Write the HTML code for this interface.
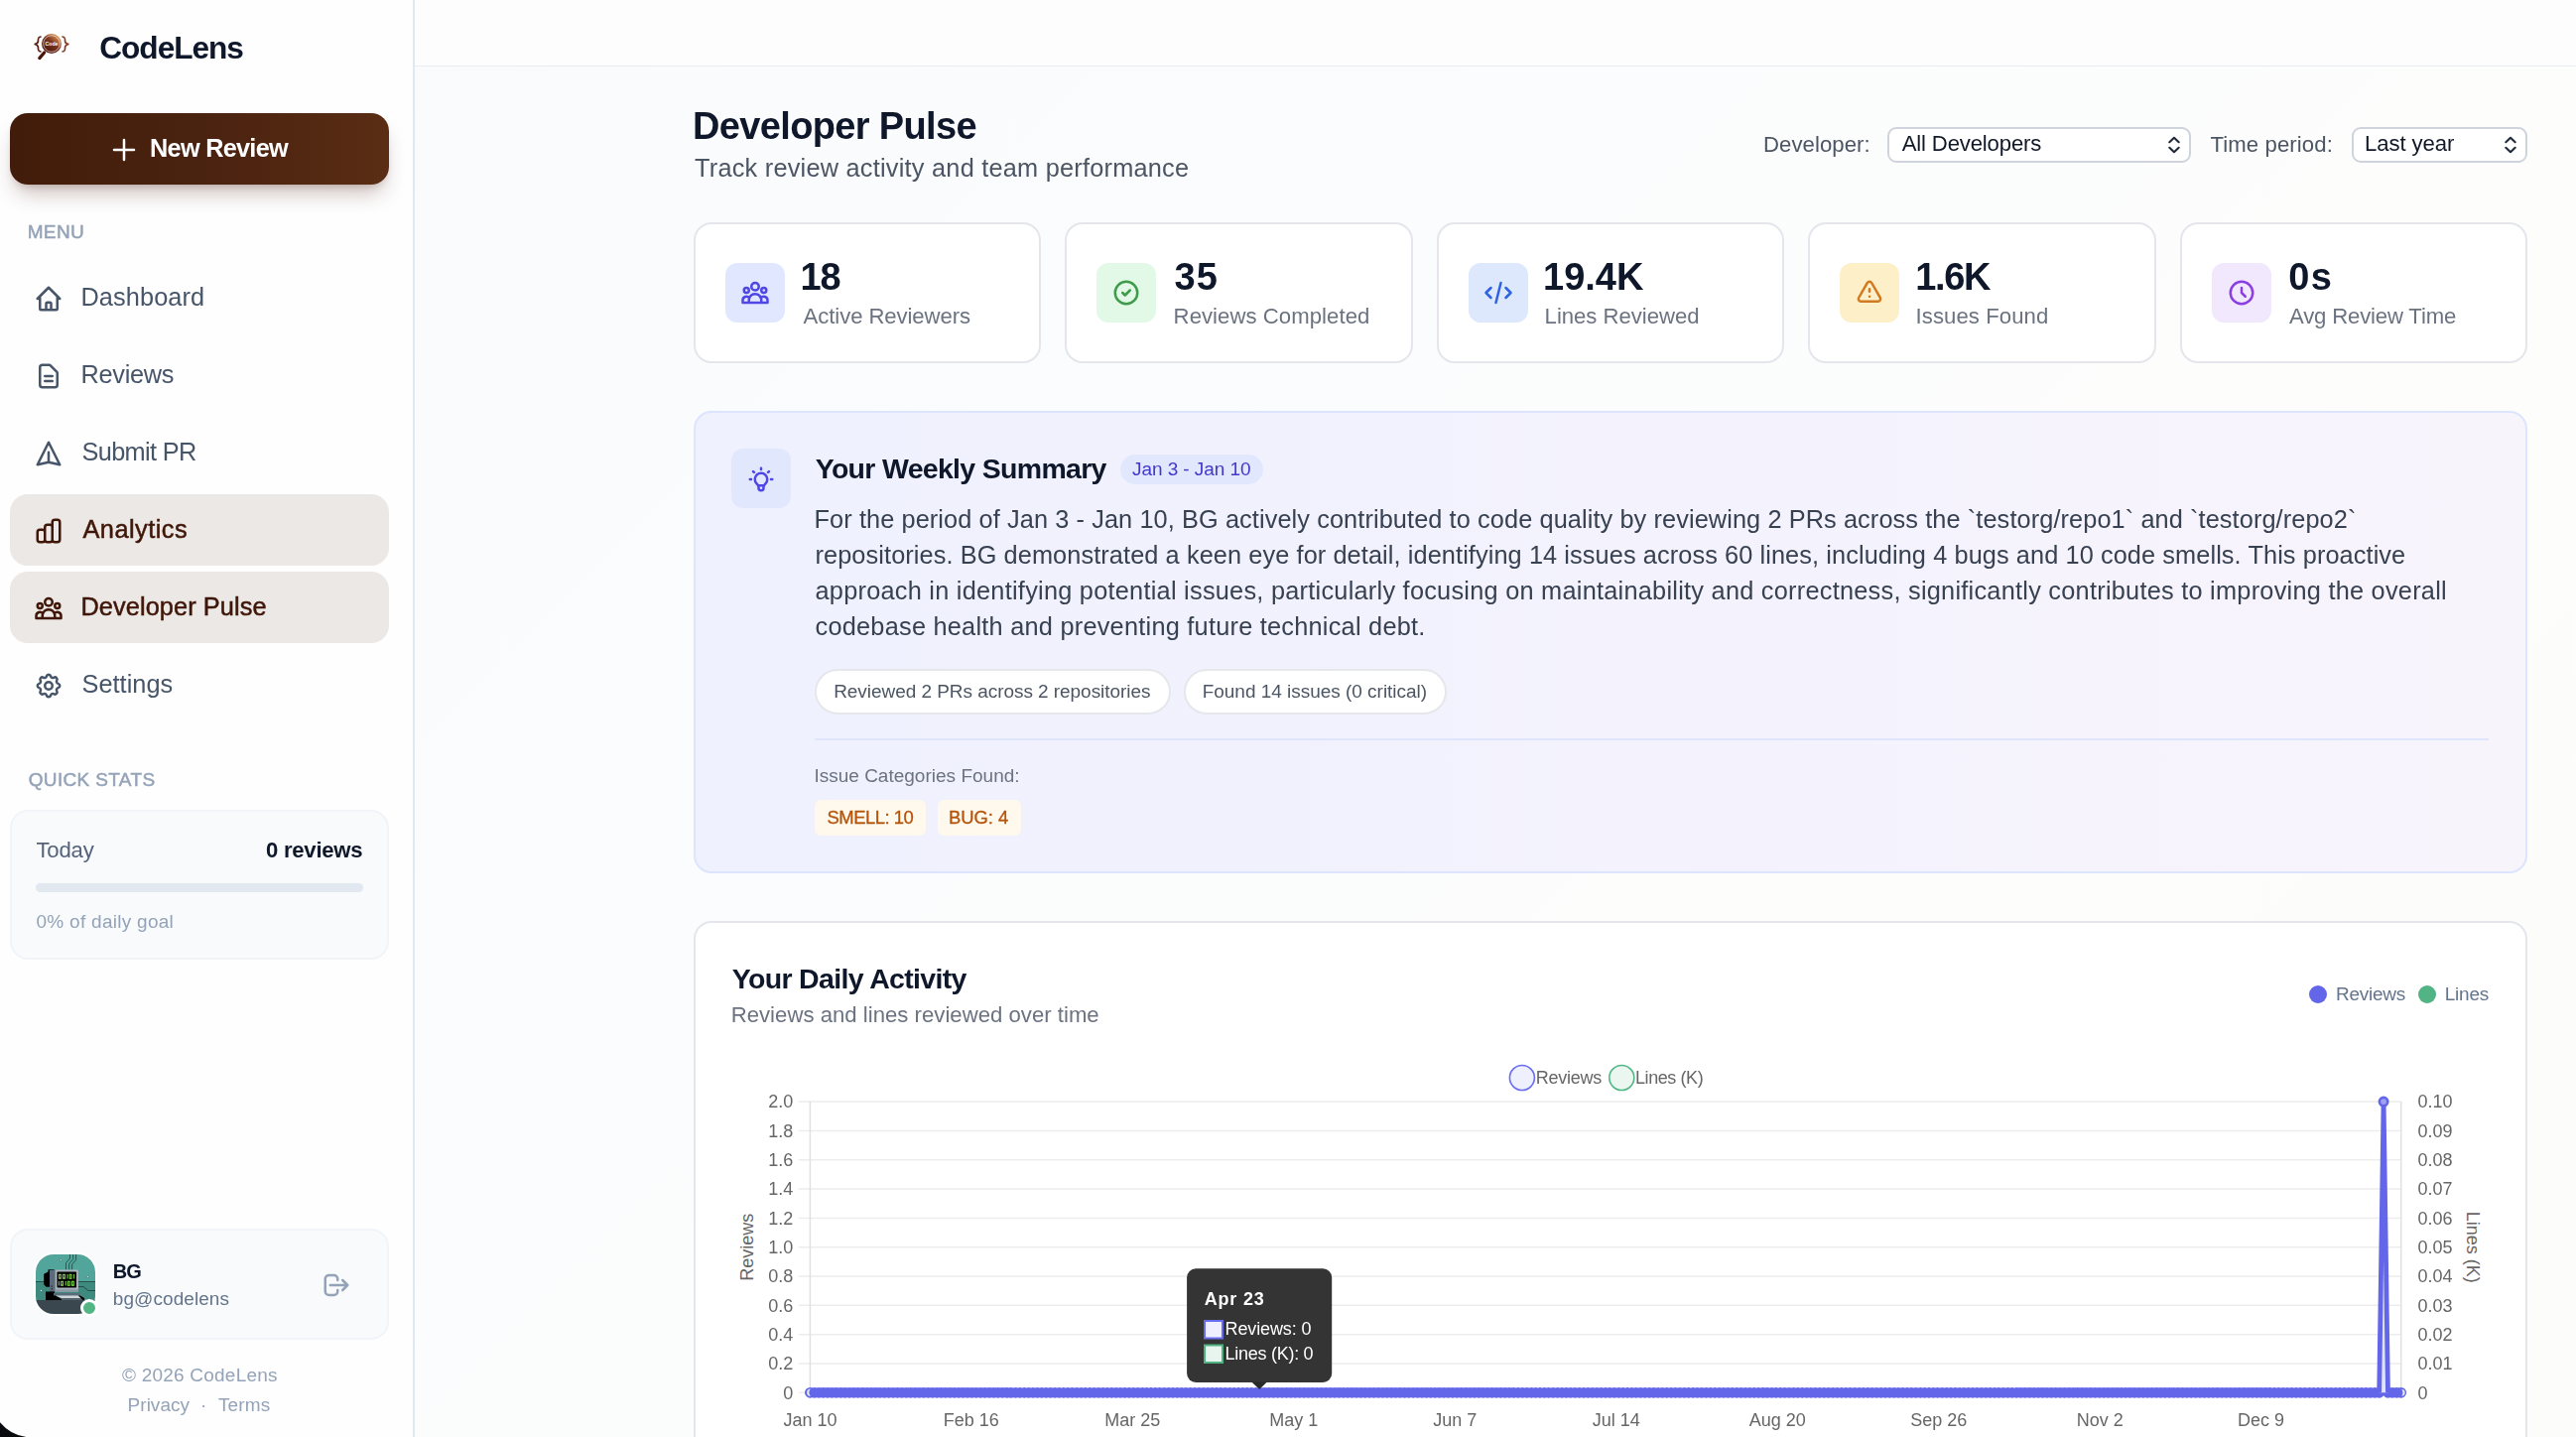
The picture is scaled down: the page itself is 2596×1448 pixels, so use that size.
<!DOCTYPE html>
<html lang="en"><head><meta charset="utf-8"><title>CodeLens - Developer Pulse</title>
<style>
*{box-sizing:border-box;margin:0;padding:0}
html,body{width:2596px;height:1448px;overflow:hidden}
body{position:relative;font-family:"Liberation Sans",sans-serif;background:linear-gradient(135deg,#f8fafc 0%,#fbfcfd 40%,#fdfdfc 70%,#fcfcfa 100%);}
.a{position:absolute}
.t{position:absolute;white-space:nowrap;font-family:"Liberation Sans",sans-serif}
.sidebar{left:0;top:0;width:418px;height:1448px;background:#fefefe;border-right:2px solid #e2e8f0}
.header{left:418px;top:0;width:2178px;height:67px;background:#fdfdfe;border-bottom:1.5px solid #e8edf3}
.btn{left:10px;top:114px;width:382px;height:72px;border-radius:18px;background:linear-gradient(90deg,#421c0a 0%,#4a2210 50%,#5a2d14 100%);box-shadow:0 14px 22px -6px rgba(67,20,7,.28),0 5px 9px -5px rgba(67,20,7,.25)}
.navact{left:10px;width:382px;height:72px;border-radius:18px;background:#ebe8e5}
.qcard{left:10px;width:382px;border-radius:18px;background:#f8fafc;border:2px solid #f1f4f8}
.card{background:#fff;border:2px solid #e4e6eb;border-radius:18px}
.ibox{width:60px;height:60px;border-radius:12px}
.sel{top:128px;height:36px;background:#fff;border:2px solid #cfd4dc;border-radius:9px}
.pill{top:674px;height:45.5px;background:#fff;border:2px solid #e5e7eb;border-radius:23px}
.tag{top:806px;height:36px;background:#fef9ec;border-radius:6px}
svg{position:absolute;overflow:visible}
.ic{fill:none;stroke-width:2;stroke-linecap:round;stroke-linejoin:round}

</style></head>
<body>
<div class="a header"></div>
<div class="a sidebar"></div>

<!-- logo -->
<svg class="a" style="left:30px;top:30px" width="44" height="34" viewBox="30 30 44 34">
  <defs>
    <linearGradient id="lg" x1="0.15" y1="0.9" x2="0.85" y2="0.1"><stop offset="0" stop-color="#4a1208"/><stop offset="0.55" stop-color="#7a3320"/><stop offset="1" stop-color="#e39a55"/></linearGradient>
  </defs>
  <path d="M41.6 37 C37.8 37 38.6 39.5 38.4 41.6 C38.2 43.5 36.6 44.3 34.6 44.5 C36.6 44.7 38.2 45.5 38.4 47.4 C38.6 49.5 37.8 52 41.6 52" fill="none" stroke="#5a1d10" stroke-width="1.7"/>
  <path d="M62.4 37 C66.2 37 65.4 39.5 65.6 41.6 C65.8 43.5 67.4 44.3 69.4 44.5 C67.4 44.7 65.8 45.5 65.6 47.4 C65.4 49.5 66.2 52 62.4 52" fill="none" stroke="#8a3d22" stroke-width="1.7"/>
  <line x1="44.6" y1="53" x2="39.8" y2="58.6" stroke="#4a1208" stroke-width="3.2" stroke-linecap="round"/>
  <circle cx="52" cy="44" r="10" fill="url(#lg)"/>
  <circle cx="52" cy="44" r="8.3" fill="none" stroke="#fff" stroke-opacity=".85" stroke-width=".7"/>
  <text x="52" y="46" text-anchor="middle" font-family="Liberation Sans, sans-serif" font-weight="700" font-size="5.2" fill="#fff">Code</text>
</svg>

<!-- new review button -->
<div class="a btn"></div>
<svg class="a ic" style="left:110px;top:136px" width="30" height="30" viewBox="0 0 24 24" stroke="#fff"><path d="M12 4v16m8-8H4"/></svg>

<!-- nav -->
<div class="a navact" style="top:498px"></div>
<div class="a navact" style="top:576px"></div>
<svg class="a ic" style="left:33.800px;top:286px" width="30" height="30" viewBox="0 0 24 24" stroke="#475569"><path d="M3 12l2-2m0 0l7-7 7 7M5 10v10a1 1 0 001 1h3m10-11l2 2m-2-2v10a1 1 0 01-1 1h-3m-6 0a1 1 0 001-1v-4a1 1 0 011-1h2a1 1 0 011 1v4a1 1 0 001 1m-6 0h6"/></svg>
<svg class="a ic" style="left:33.800px;top:364px" width="30" height="30" viewBox="0 0 24 24" stroke="#475569"><path d="M9 12h6m-6 4h6m2 5H7a2 2 0 01-2-2V5a2 2 0 012-2h5.586a1 1 0 01.707.293l5.414 5.414a1 1 0 01.293.707V19a2 2 0 01-2 2z"/></svg>
<svg class="a ic" style="left:33.800px;top:442px" width="30" height="30" viewBox="0 0 24 24" stroke="#475569"><path d="M12 19l9 2-9-18-9 18 9-2zm0 0v-8"/></svg>
<svg class="a ic" style="left:33.800px;top:520px" width="30" height="30" viewBox="0 0 24 24" stroke="#3f1608"><path d="M9 19v-6a2 2 0 00-2-2H5a2 2 0 00-2 2v6a2 2 0 002 2h2a2 2 0 002-2zm0 0V9a2 2 0 012-2h2a2 2 0 012 2v10m-6 0a2 2 0 002 2h2a2 2 0 002-2m0 0V5a2 2 0 012-2h2a2 2 0 012 2v14a2 2 0 01-2 2h-2a2 2 0 01-2-2z"/></svg>
<svg class="a ic" style="left:33.800px;top:598px" width="30" height="30" viewBox="0 0 24 24" stroke="#3f1608"><path d="M17 20h5v-2a3 3 0 00-5.356-1.857M17 20H7m10 0v-2c0-.656-.126-1.283-.356-1.857M7 20H2v-2a3 3 0 015.356-1.857M7 20v-2c0-.656.126-1.283.356-1.857m0 0a5.002 5.002 0 019.288 0M15 7a3 3 0 11-6 0 3 3 0 016 0zm6 3a2 2 0 11-4 0 2 2 0 014 0zM7 10a2 2 0 11-4 0 2 2 0 014 0z"/></svg>
<svg class="a ic" style="left:33.800px;top:676px" width="30" height="30" viewBox="0 0 24 24" stroke="#475569"><path d="M10.325 4.317c.426-1.756 2.924-1.756 3.35 0a1.724 1.724 0 002.573 1.066c1.543-.94 3.31.826 2.37 2.37a1.724 1.724 0 001.065 2.572c1.756.426 1.756 2.924 0 3.35a1.724 1.724 0 00-1.066 2.573c.94 1.543-.826 3.31-2.37 2.37a1.724 1.724 0 00-2.572 1.065c-.426 1.756-2.924 1.756-3.35 0a1.724 1.724 0 00-2.573-1.066c-1.543.94-3.31-.826-2.37-2.37a1.724 1.724 0 00-1.065-2.572c-1.756-.426-1.756-2.924 0-3.35a1.724 1.724 0 001.066-2.573c-.94-1.543.826-3.31 2.37-2.37.996.608 2.296.07 2.572-1.065z"/><path d="M15 12a3 3 0 11-6 0 3 3 0 016 0z"/></svg>

<!-- quick stats -->
<div class="a qcard" style="top:816px;height:151px"></div>
<div class="a" style="left:36px;top:890px;width:330px;height:9px;border-radius:5px;background:#e2e8f0"></div>

<!-- user card -->
<div class="a qcard" style="top:1238px;height:112px"></div>
<div class="a" style="left:34px;top:1262px;width:64px;height:64px;border-radius:20px;background:#fff"></div>
<svg class="a" style="left:36px;top:1264px" width="60" height="60" viewBox="0 0 60 60">
  <defs><clipPath id="av"><rect width="60" height="60" rx="18"/></clipPath></defs>
  <g clip-path="url(#av)">
    <rect width="60" height="27.4" fill="#52a59a"/>
    <rect y="27.4" width="60" height="19" fill="#3f8a7e"/>
    <rect y="27" width="60" height=".9" fill="#1d4843"/>
    <rect y="46" width="60" height="14" fill="#3a474f"/>
    <path d="M30.5 15.5V8.5l4-4.5V0M33.7 15.5V9.3l4-4.5V0M36.6 15.5V10l4-4.5V0" fill="none" stroke="#1f4f4a" stroke-width=".9"/>
    <path d="M43 32.5h5l5 4h7" fill="none" stroke="#1d4843" stroke-width=".9"/>
    <circle cx="25.2" cy="5.8" r="1" fill="#fff" stroke="#1f4f4a" stroke-width=".5"/>
    <circle cx="52.3" cy="22.6" r="1" fill="#fff" stroke="#1f4f4a" stroke-width=".5"/>
    <circle cx="5.4" cy="36.6" r="1" fill="#fff" stroke="#1f4f4a" stroke-width=".5"/>
    <path d="M12.5 15.2h6v22.5h-4.5v-5h-3.5l-2.3-2.500v-10.500l4.300-2.300z" fill="#000"/>
    <rect x="10" y="37.5" width="9" height="8.6" fill="#000"/>
    <rect x="14" y="15.8" width="6" height="21.5" fill="#5b6b7a"/>
    <rect x="19.6" y="15.4" width="23.3" height="22" rx="1.2" fill="#aab4bd"/>
    <rect x="19.6" y="35.3" width="23.3" height="2.3" fill="#8d99a5"/>
    <rect x="21.5" y="17.5" width="19.5" height="16" rx=".8" fill="#000"/>
    <g fill="none" stroke="#7ac943" stroke-width="1.1">
      <rect x="23.5" y="20.3" width="1.8" height="4"/><rect x="27.6" y="20.3" width="1.8" height="4"/><path d="M32 20v4.600"/><rect x="34.200" y="20.3" width="1.8" height="4"/><path d="M38.600 20v4.600"/>
      <path d="M23.400 27v4.600"/><rect x="25.600" y="27.300" width="1.8" height="4"/><path d="M30.200 27v4.600"/><rect x="32.400" y="27.300" width="1.8" height="4"/><rect x="36.500" y="27.300" width="1.8" height="4"/>
    </g>
    <rect x="15.600" y="31.500" width="1.2" height="1.200" fill="#1a1f24"/><rect x="15.600" y="34" width="1.2" height="1.600" fill="#2c343c"/>
    <rect x="18" y="39" width="26.800" height="2.600" fill="#5b6b7a"/>
    <path d="M18 41.600h2l6 3.400v1h-8z" fill="#000"/>
    <path d="M20 41.600h22.800l4.200 2.400h-21z" fill="#cfd5da"/>
    <path d="M26 44h21.500l1.500 2h-23z" fill="#55636f"/>
    <path d="M44.800 41.600l4.200 2.400v2h-1.500l-4.700-4.400z" fill="#000"/>
  </g>
</svg>
<div class="a" style="left:81px;top:1309px;width:18px;height:18px;border-radius:9px;background:#53b584;border:3px solid #fff"></div>
<svg class="a ic" style="left:323.500px;top:1279.500px" width="30" height="30" viewBox="0 0 24 24" stroke="#94a3b8"><path d="M17 16l4-4m0 0l-4-4m4 4H7m6 4v1a3 3 0 01-3 3H6a3 3 0 01-3-3V7a3 3 0 013-3h4a3 3 0 013 3v1"/></svg>

<!-- window corner -->
<svg class="a" style="left:0;top:1408px" width="60" height="40" viewBox="0 1408 60 40"><path d="M0 1448V1433.200A42.140 42.140 0 0 0 26.400 1448Z" fill="#0a0b0e"/></svg>

<!-- selects -->
<div class="a sel" style="left:1902px;width:305.500px"></div>
<div class="a sel" style="left:2369.500px;width:177.500px"></div>
<svg class="a" style="left:2184px;top:137px" width="14" height="18" viewBox="0 0 14 18" fill="none" stroke="#1f2937" stroke-width="2.100" stroke-linecap="round" stroke-linejoin="round"><path d="M2.300 6.200L7 1.800l4.700 4.400M2.300 11.800L7 16.200l4.700-4.400"/></svg>
<svg class="a" style="left:2523px;top:137px" width="14" height="18" viewBox="0 0 14 18" fill="none" stroke="#1f2937" stroke-width="2.100" stroke-linecap="round" stroke-linejoin="round"><path d="M2.300 6.200L7 1.800l4.700 4.400M2.300 11.800L7 16.200l4.700-4.400"/></svg>

<!-- stat cards -->
<div class="a card" style="left:699.0px;top:224px;width:350.4px;height:142px"></div>
<div class="a card" style="left:1073.4px;top:224px;width:350.4px;height:142px"></div>
<div class="a card" style="left:1447.8px;top:224px;width:350.4px;height:142px"></div>
<div class="a card" style="left:1822.2px;top:224px;width:350.4px;height:142px"></div>
<div class="a card" style="left:2196.6px;top:224px;width:350.4px;height:142px"></div>
<div class="a ibox" style="left:731.0px;top:265px;background:#e0e7ff"></div>
<div class="a ibox" style="left:1105.4px;top:265px;background:#e1f9e6"></div>
<div class="a ibox" style="left:1479.8px;top:265px;background:#dde8fd"></div>
<div class="a ibox" style="left:1854.2px;top:265px;background:#fdf0c8"></div>
<div class="a ibox" style="left:2228.6px;top:265px;background:#f1e8fd"></div>
<svg class="a ic" style="left:746.0px;top:280px" width="30" height="30" viewBox="0 0 24 24" stroke="#4f46e5"><path d="M17 20h5v-2a3 3 0 00-5.356-1.857M17 20H7m10 0v-2c0-.656-.126-1.283-.356-1.857M7 20H2v-2a3 3 0 015.356-1.857M7 20v-2c0-.656.126-1.283.356-1.857m0 0a5.002 5.002 0 019.288 0M15 7a3 3 0 11-6 0 3 3 0 016 0zm6 3a2 2 0 11-4 0 2 2 0 014 0zM7 10a2 2 0 11-4 0 2 2 0 014 0z"/></svg>
<svg class="a ic" style="left:1120.4px;top:280px" width="30" height="30" viewBox="0 0 24 24" stroke="#3f9b4b"><path d="M9 12l2 2 4-4m6 2a9 9 0 11-18 0 9 9 0 0118 0z"/></svg>
<svg class="a ic" style="left:1494.8px;top:280px" width="30" height="30" viewBox="0 0 24 24" stroke="#2f62e0"><path d="M10 20l4-16m4 4l4 4-4 4M6 16l-4-4 4-4"/></svg>
<svg class="a ic" style="left:1869.2px;top:280px" width="30" height="30" viewBox="0 0 24 24" stroke="#d07a22"><path d="M12 9v2m0 4h.01m-6.938 4h13.856c1.540 0 2.502-1.667 1.732-3L13.732 4c-.770-1.333-2.694-1.333-3.464 0L3.340 16c-.770 1.333.192 3 1.732 3z"/></svg>
<svg class="a ic" style="left:2243.6px;top:280px" width="30" height="30" viewBox="0 0 24 24" stroke="#8b3fe0"><path d="M12 8v4l3 3m6-3a9 9 0 11-18 0 9 9 0 0118 0z"/></svg>

<!-- weekly summary -->
<div class="a" style="left:699px;top:414px;width:1848px;height:466px;border-radius:18px;border:2px solid #dde4fd;background:linear-gradient(90deg,#eff1fe 0%,#f3f2fd 50%,#f8f4fc 100%)"></div>
<div class="a ibox" style="left:737px;top:452px;background:#e1e7fd"></div>
<svg class="a ic" style="left:752px;top:468px" width="30" height="30" viewBox="0 0 24 24" stroke="#4f46e5"><path d="M9.663 17h4.673M12 3v1m6.364 1.636l-.707.707M21 12h-1M4 12H3m3.343-5.657l-.707-.707m2.828 9.900a5 5 0 117.072 0l-.548.547A3.374 3.374 0 0014 18.469V19a2 2 0 11-4 0v-.531c0-.895-.356-1.754-.988-2.386l-.548-.547z"/></svg>
<div class="a" style="left:1129px;top:458px;width:143.500px;height:30px;border-radius:15px;background:#e1e7fd"></div>
<div class="a pill" style="left:821px;width:359px"></div>
<div class="a pill" style="left:1193px;width:265px"></div>
<div class="a" style="left:821px;top:744px;width:1687px;height:2px;background:#dfe5fb"></div>
<div class="a tag" style="left:821px;width:112px"></div>
<div class="a tag" style="left:945px;width:83.500px"></div>

<!-- chart card -->
<div class="a card" style="left:699px;top:928px;width:1848px;height:560px"></div>
<div class="a" style="left:2327px;top:993px;width:18px;height:18px;border-radius:9px;background:#6466e9"></div>
<div class="a" style="left:2437px;top:993px;width:18px;height:18px;border-radius:9px;background:#52b385"></div>
<svg class="a" style="left:700px;top:1040px" width="1846" height="408" viewBox="700 1040 1846 408" font-family="Liberation Sans, sans-serif">
<line x1="804.8" y1="1110.10" x2="2419.7" y2="1110.10" stroke="#ededed" stroke-width="1.5"/>
<line x1="804.8" y1="1139.42" x2="2419.7" y2="1139.42" stroke="#ededed" stroke-width="1.5"/>
<line x1="804.8" y1="1168.74" x2="2419.7" y2="1168.74" stroke="#ededed" stroke-width="1.5"/>
<line x1="804.8" y1="1198.06" x2="2419.7" y2="1198.06" stroke="#ededed" stroke-width="1.5"/>
<line x1="804.8" y1="1227.38" x2="2419.7" y2="1227.38" stroke="#ededed" stroke-width="1.5"/>
<line x1="804.8" y1="1256.70" x2="2419.7" y2="1256.70" stroke="#ededed" stroke-width="1.5"/>
<line x1="804.8" y1="1286.02" x2="2419.7" y2="1286.02" stroke="#ededed" stroke-width="1.5"/>
<line x1="804.8" y1="1315.34" x2="2419.7" y2="1315.34" stroke="#ededed" stroke-width="1.5"/>
<line x1="804.8" y1="1344.66" x2="2419.7" y2="1344.66" stroke="#ededed" stroke-width="1.5"/>
<line x1="804.8" y1="1373.98" x2="2419.7" y2="1373.98" stroke="#ededed" stroke-width="1.5"/>
<line x1="804.8" y1="1403.30" x2="2419.7" y2="1403.30" stroke="#ededed" stroke-width="1.5"/>
<line x1="816.4" y1="1110.10" x2="816.4" y2="1403.30" stroke="#e0e0e0" stroke-width="1.5"/>
<line x1="2419.7" y1="1110.10" x2="2419.7" y2="1403.30" stroke="#e0e0e0" stroke-width="1.5"/>
<text transform="translate(759.3 1256.7) rotate(-90)" text-anchor="middle" font-size="18" fill="#666">Reviews</text>
<text transform="translate(2486.2 1256.7) rotate(90)" text-anchor="middle" font-size="18" fill="#666">Lines (K)</text>
<circle cx="1533.9" cy="1086" r="12.5" fill="#eef0fd" stroke="#6a6df0" stroke-width="1.6"/>
<circle cx="1634.3" cy="1086" r="12.5" fill="#ecf6f1" stroke="#52b786" stroke-width="1.6"/>
<path d="M816.4 1403.30H2397.69" stroke="#6466e9" stroke-width="10.8" stroke-linecap="round" stroke-dasharray="0 4.4047" fill="none"/>
<path d="M2406.49 1403.30H2419.71" stroke="#6466e9" stroke-width="10.8" stroke-linecap="round" stroke-dasharray="0 4.4047" fill="none"/>
<path d="M816.4 1403.30H2397.68M2406.49 1403.30H2419.7" stroke="#6466e9" stroke-width="8.6" fill="none"/>
<path d="M816.80 1399.60A3.7 3.7 0 0 0 816.80 1407.00A6 6 0 0 1 816.80 1399.60Z" fill="#dfe7f3"/>
<path d="M2420.30 1399.90A3.4 3.4 0 0 1 2420.30 1406.70A6 6 0 0 0 2420.30 1399.90Z" fill="#dfe7f3"/>
<path d="M2397.68 1403.30L2402.08 1110.10L2406.49 1403.30Z" fill="#dfe5f6"/>
<path d="M2397.68 1403.30L2402.08 1110.10L2406.49 1403.30" fill="none" stroke="#6466e9" stroke-width="4.8" stroke-linejoin="round"/>
<circle cx="2402.08" cy="1110.10" r="4.2" fill="#9fa1f2" stroke="#6466e9" stroke-width="2.6"/>
<rect x="1196.1" y="1278.3" width="146.1" height="114.6" rx="9" fill="#343434"/>
<path d="M1261.3 1392.6h15.6l-7.700 7.400z" fill="#2a2a2a"/>
<rect x="1214" y="1331" width="18" height="17.500" fill="#eeeefe" stroke="#6a6cf0" stroke-width="2"/>
<rect x="1214" y="1355.500" width="18" height="17.500" fill="#e8f5ee" stroke="#4fb381" stroke-width="2"/>
</svg>

<!-- text layer -->
<div class="a" style="left:0;top:0;width:2596px;height:1448px;will-change:transform">
<div class="t" style="left:100.3px;top:33.00px;font-size:31.65px;line-height:31.65px;color:#0f172a;font-weight:700;letter-spacing:-1.05px;">CodeLens</div>
<div class="t" style="left:151.0px;top:137.00px;font-size:25.32px;line-height:25.32px;color:#ffffff;font-weight:700;letter-spacing:-0.736px;">New Review</div>
<div class="t" style="left:27.7px;top:224.00px;font-size:18.99px;line-height:18.99px;color:#94a3b8;letter-spacing:0.371px;-webkit-text-stroke:0.5px #94a3b8;">MENU</div>
<div class="t" style="left:81.5px;top:287.00px;font-size:25.32px;line-height:25.32px;color:#475569;letter-spacing:0.093px;">Dashboard</div>
<div class="t" style="left:81.5px;top:365.00px;font-size:25.32px;line-height:25.32px;color:#475569;letter-spacing:-0.282px;">Reviews</div>
<div class="t" style="left:82.5px;top:443.00px;font-size:25.32px;line-height:25.32px;color:#475569;letter-spacing:-0.65px;">Submit PR</div>
<div class="t" style="left:83.5px;top:521.00px;font-size:25.32px;line-height:25.32px;color:#3f1608;letter-spacing:0.471px;-webkit-text-stroke:0.5px #3f1608;">Analytics</div>
<div class="t" style="left:81.5px;top:599.00px;font-size:25.32px;line-height:25.32px;color:#3f1608;letter-spacing:0.089px;-webkit-text-stroke:0.5px #3f1608;">Developer Pulse</div>
<div class="t" style="left:82.5px;top:677.00px;font-size:25.32px;line-height:25.32px;color:#475569;letter-spacing:0.028px;">Settings</div>
<div class="t" style="left:28.7px;top:776.00px;font-size:18.99px;line-height:18.99px;color:#94a3b8;letter-spacing:0.36px;-webkit-text-stroke:0.5px #94a3b8;">QUICK STATS</div>
<div class="t" style="left:36.5px;top:846.00px;font-size:22.15px;line-height:22.15px;color:#55637a;letter-spacing:-0.202px;">Today</div>
<div class="t" style="left:268.0px;top:846.00px;font-size:22.15px;line-height:22.15px;color:#0f172a;font-weight:700;letter-spacing:-0.262px;">0 reviews</div>
<div class="t" style="left:36.5px;top:919.00px;font-size:18.99px;line-height:18.99px;color:#94a3b8;letter-spacing:0.286px;">0% of daily goal</div>
<div class="t" style="left:113.8px;top:1271.00px;font-size:20.04px;line-height:20.04px;color:#0f172a;font-weight:700;letter-spacing:-0.966px;">BG</div>
<div class="t" style="left:113.8px;top:1299.00px;font-size:18.99px;line-height:18.99px;color:#64748b;letter-spacing:0.081px;">bg@codelens</div>
<div class="t" style="left:123.0px;top:1376.00px;font-size:18.99px;line-height:18.99px;color:#94a3b8;letter-spacing:0.227px;">© 2026 CodeLens</div>
<div class="t" style="left:128.6px;top:1406.00px;font-size:18.99px;line-height:18.99px;color:#94a3b8;letter-spacing:0.026px;">Privacy</div>
<div class="t" style="left:202.0px;top:1406.00px;font-size:18.99px;line-height:18.99px;color:#94a3b8;">·</div>
<div class="t" style="left:220.0px;top:1406.00px;font-size:18.99px;line-height:18.99px;color:#94a3b8;letter-spacing:0.129px;">Terms</div>
<div class="t" style="left:698.0px;top:108.00px;font-size:37.98px;line-height:37.98px;color:#0f172a;font-weight:700;letter-spacing:-0.631px;">Developer Pulse</div>
<div class="t" style="left:700.0px;top:157.00px;font-size:25.32px;line-height:25.32px;color:#4b5563;letter-spacing:0.231px;">Track review activity and team performance</div>
<div class="t" style="left:1777.0px;top:135.00px;font-size:22.15px;line-height:22.15px;color:#4b5563;letter-spacing:0.065px;">Developer:</div>
<div class="t" style="left:1916.7px;top:134.00px;font-size:22.15px;line-height:22.15px;color:#111827;letter-spacing:-0.16px;">All Developers</div>
<div class="t" style="left:2227.5px;top:135.00px;font-size:22.15px;line-height:22.15px;color:#4b5563;letter-spacing:0.102px;">Time period:</div>
<div class="t" style="left:2383.0px;top:134.00px;font-size:22.15px;line-height:22.15px;color:#111827;letter-spacing:-0.087px;">Last year</div>
<div class="t" style="left:806.59px;top:260.00px;font-size:37.98px;line-height:37.98px;color:#0f172a;font-weight:700;letter-spacing:-1.3px;">18</div>
<div class="t" style="left:809.6px;top:308.00px;font-size:22.15px;line-height:22.15px;color:#6b7280;letter-spacing:-0.088px;">Active Reviewers</div>
<div class="t" style="left:1183.39px;top:260.00px;font-size:37.98px;line-height:37.98px;color:#0f172a;font-weight:700;letter-spacing:1.3px;">35</div>
<div class="t" style="left:1182.6px;top:308.00px;font-size:22.15px;line-height:22.15px;color:#6b7280;letter-spacing:0.052px;">Reviews Completed</div>
<div class="t" style="left:1555.0px;top:260.00px;font-size:37.98px;line-height:37.98px;color:#0f172a;font-weight:700;letter-spacing:0.025px;">19.4K</div>
<div class="t" style="left:1556.6px;top:308.00px;font-size:22.15px;line-height:22.15px;color:#6b7280;letter-spacing:-0.022px;">Lines Reviewed</div>
<div class="t" style="left:1930.21px;top:260.00px;font-size:37.98px;line-height:37.98px;color:#0f172a;font-weight:700;letter-spacing:-1.3px;">1.6K</div>
<div class="t" style="left:1930.6px;top:308.00px;font-size:22.15px;line-height:22.15px;color:#6b7280;letter-spacing:0.072px;">Issues Found</div>
<div class="t" style="left:2306.29px;top:260.00px;font-size:37.98px;line-height:37.98px;color:#0f172a;font-weight:700;letter-spacing:1.3px;">0s</div>
<div class="t" style="left:2307.0px;top:308.00px;font-size:22.15px;line-height:22.15px;color:#6b7280;letter-spacing:-0.172px;">Avg Review Time</div>
<div class="t" style="left:821.7px;top:458.00px;font-size:28.48px;line-height:28.48px;color:#0f172a;font-weight:700;letter-spacing:-0.676px;">Your Weekly Summary</div>
<div class="t" style="left:1141.0px;top:463.00px;font-size:18.99px;line-height:18.99px;color:#4338ca;letter-spacing:-0.058px;">Jan 3 - Jan 10</div>
<div class="t" style="left:820.5px;top:511.00px;font-size:25.32px;line-height:25.32px;color:#374151;letter-spacing:0.096px;">For the period of Jan 3 - Jan 10, BG actively contributed to code quality by reviewing 2 PRs across the `testorg/repo1` and `testorg/repo2`</div>
<div class="t" style="left:821.5px;top:547.00px;font-size:25.32px;line-height:25.32px;color:#374151;letter-spacing:0.093px;">repositories. BG demonstrated a keen eye for detail, identifying 14 issues across 60 lines, including 4 bugs and 10 code smells. This proactive</div>
<div class="t" style="left:821.5px;top:583.00px;font-size:25.32px;line-height:25.32px;color:#374151;letter-spacing:0.251px;">approach in identifying potential issues, particularly focusing on maintainability and correctness, significantly contributes to improving the overall</div>
<div class="t" style="left:821.5px;top:619.00px;font-size:25.32px;line-height:25.32px;color:#374151;letter-spacing:0.241px;">codebase health and preventing future technical debt.</div>
<div class="t" style="left:840.2px;top:687.00px;font-size:18.99px;line-height:18.99px;color:#4b5563;letter-spacing:-0.042px;">Reviewed 2 PRs across 2 repositories</div>
<div class="t" style="left:1211.7px;top:687.00px;font-size:18.99px;line-height:18.99px;color:#4b5563;letter-spacing:-0.016px;">Found 14 issues (0 critical)</div>
<div class="t" style="left:820.4px;top:772.00px;font-size:18.99px;line-height:18.99px;color:#6b7280;letter-spacing:0.015px;">Issue Categories Found:</div>
<div class="t" style="left:833.5px;top:815.00px;font-size:18.46px;line-height:18.46px;color:#b45309;letter-spacing:-0.508px;-webkit-text-stroke:0.3px #b45309;">SMELL: 10</div>
<div class="t" style="left:956.0px;top:815.00px;font-size:18.46px;line-height:18.46px;color:#b45309;letter-spacing:-0.04px;-webkit-text-stroke:0.3px #b45309;">BUG: 4</div>
<div class="t" style="left:737.7px;top:972.00px;font-size:28.48px;line-height:28.48px;color:#0f172a;font-weight:700;letter-spacing:-0.645px;">Your Daily Activity</div>
<div class="t" style="left:736.7px;top:1012.00px;font-size:22.15px;line-height:22.15px;color:#6b7280;letter-spacing:0.017px;">Reviews and lines reviewed over time</div>
<div class="t" style="left:2354.0px;top:992.00px;font-size:18.99px;line-height:18.99px;color:#64748b;letter-spacing:-0.258px;">Reviews</div>
<div class="t" style="left:2463.8px;top:992.00px;font-size:18.99px;line-height:18.99px;color:#64748b;letter-spacing:-0.248px;">Lines</div>
<div class="t" style="left:1547.7px;top:1077.00px;font-size:18px;line-height:18px;color:#666666;letter-spacing:-0.253px;">Reviews</div>
<div class="t" style="left:1648.0px;top:1077.00px;font-size:18px;line-height:18px;color:#666666;letter-spacing:-0.417px;">Lines (K)</div>
<div class="t" style="left:774.19px;top:1101.00px;font-size:18px;line-height:18px;color:#666666;">2.0</div>
<div class="t" style="left:774.19px;top:1131.00px;font-size:18px;line-height:18px;color:#666666;">1.8</div>
<div class="t" style="left:774.19px;top:1160.00px;font-size:18px;line-height:18px;color:#666666;">1.6</div>
<div class="t" style="left:774.19px;top:1189.00px;font-size:18px;line-height:18px;color:#666666;">1.4</div>
<div class="t" style="left:774.19px;top:1219.00px;font-size:18px;line-height:18px;color:#666666;">1.2</div>
<div class="t" style="left:774.19px;top:1248.00px;font-size:18px;line-height:18px;color:#666666;">1.0</div>
<div class="t" style="left:774.19px;top:1277.00px;font-size:18px;line-height:18px;color:#666666;">0.8</div>
<div class="t" style="left:774.19px;top:1307.00px;font-size:18px;line-height:18px;color:#666666;">0.6</div>
<div class="t" style="left:774.19px;top:1336.00px;font-size:18px;line-height:18px;color:#666666;">0.4</div>
<div class="t" style="left:774.19px;top:1365.00px;font-size:18px;line-height:18px;color:#666666;">0.2</div>
<div class="t" style="left:789.2px;top:1395.00px;font-size:18px;line-height:18px;color:#666666;">0</div>
<div class="t" style="left:2436.6px;top:1101.00px;font-size:18px;line-height:18px;color:#666666;">0.10</div>
<div class="t" style="left:2436.6px;top:1131.00px;font-size:18px;line-height:18px;color:#666666;">0.09</div>
<div class="t" style="left:2436.6px;top:1160.00px;font-size:18px;line-height:18px;color:#666666;">0.08</div>
<div class="t" style="left:2436.6px;top:1189.00px;font-size:18px;line-height:18px;color:#666666;">0.07</div>
<div class="t" style="left:2436.6px;top:1219.00px;font-size:18px;line-height:18px;color:#666666;">0.06</div>
<div class="t" style="left:2436.6px;top:1248.00px;font-size:18px;line-height:18px;color:#666666;">0.05</div>
<div class="t" style="left:2436.6px;top:1277.00px;font-size:18px;line-height:18px;color:#666666;">0.04</div>
<div class="t" style="left:2436.6px;top:1307.00px;font-size:18px;line-height:18px;color:#666666;">0.03</div>
<div class="t" style="left:2436.6px;top:1336.00px;font-size:18px;line-height:18px;color:#666666;">0.02</div>
<div class="t" style="left:2436.6px;top:1365.00px;font-size:18px;line-height:18px;color:#666666;">0.01</div>
<div class="t" style="left:2436.6px;top:1395.00px;font-size:18px;line-height:18px;color:#666666;">0</div>
<div class="t" style="left:789.38px;top:1422.00px;font-size:18px;line-height:18px;color:#666666;">Jan 10</div>
<div class="t" style="left:950.85px;top:1422.00px;font-size:18px;line-height:18px;color:#666666;">Feb 16</div>
<div class="t" style="left:1113.33px;top:1422.00px;font-size:18px;line-height:18px;color:#666666;">Mar 25</div>
<div class="t" style="left:1279.3px;top:1422.00px;font-size:18px;line-height:18px;color:#666666;">May 1</div>
<div class="t" style="left:1444.26px;top:1422.00px;font-size:18px;line-height:18px;color:#666666;">Jun 7</div>
<div class="t" style="left:1604.73px;top:1422.00px;font-size:18px;line-height:18px;color:#666666;">Jul 14</div>
<div class="t" style="left:1762.7px;top:1422.00px;font-size:18px;line-height:18px;color:#666666;">Aug 20</div>
<div class="t" style="left:1925.17px;top:1422.00px;font-size:18px;line-height:18px;color:#666666;">Sep 26</div>
<div class="t" style="left:2092.65px;top:1422.00px;font-size:18px;line-height:18px;color:#666666;">Nov 2</div>
<div class="t" style="left:2255.12px;top:1422.00px;font-size:18px;line-height:18px;color:#666666;">Dec 9</div>
<div class="t" style="left:1213.7px;top:1300.00px;font-size:18px;line-height:18px;color:#ffffff;font-weight:700;letter-spacing:0.798px;">Apr 23</div>
<div class="t" style="left:1234.5px;top:1330.00px;font-size:18px;line-height:18px;color:#ffffff;letter-spacing:-0.113px;">Reviews: 0</div>
<div class="t" style="left:1234.5px;top:1355.00px;font-size:18px;line-height:18px;color:#ffffff;letter-spacing:-0.266px;">Lines (K): 0</div>
</div>
</body></html>
